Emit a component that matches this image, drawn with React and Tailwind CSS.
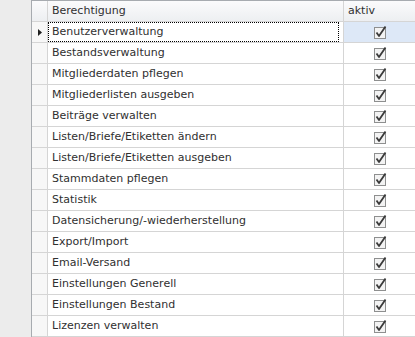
import React from 'react';

const rows = [
  'Benutzerverwaltung',
  'Bestandsverwaltung',
  'Mitgliederdaten pflegen',
  'Mitgliederlisten ausgeben',
  'Beiträge verwalten',
  'Listen/Briefe/Etiketten ändern',
  'Listen/Briefe/Etiketten ausgeben',
  'Stammdaten pflegen',
  'Statistik',
  'Datensicherung/-wiederherstellung',
  'Export/Import',
  'Email-Versand',
  'Einstellungen Generell',
  'Einstellungen Bestand',
  'Lizenzen verwalten',
];

function CheckBox() {
  return (
    <svg width="14" height="14" viewBox="0 0 14 14" className="block">
      <rect x="1.5" y="2.5" width="11" height="11" fill="#f3f3f3" stroke="#8e8f8f" />
      <path d="M3.5 7.5 L6 11 L12.5 1.5" fill="none" stroke="#3a3a3a" strokeWidth="1.8" strokeLinejoin="round" />
    </svg>
  );
}

export default function App() {
  return (
    <div
      className="flex h-[337px] w-[415px] overflow-hidden bg-white text-[11px] text-[#303030]"
      style={{ fontFamily: 'Tahoma, "DejaVu Sans", sans-serif' }}
    >
      <div className="w-[32px] shrink-0 border-r border-[#a7abb0] bg-[#ececec]" />
      <div className="flex-1">
        {/* header */}
        <div className="grid h-[22px] grid-cols-[16px_296px_1fr] border-t border-[#a7abb0] bg-gradient-to-b from-[#fbfbfc] to-[#eceef1]">
          <div className="border-r border-b border-[#d5d5d5]" />
          <div className="flex items-center border-r border-b border-[#d5d5d5] pl-[4px]">Berechtigung</div>
          <div className="flex items-center border-b border-[#d5d5d5] pl-[4px]">aktiv</div>
        </div>
        {rows.map((r, i) => (
          <div key={r} className="grid h-[21px] grid-cols-[16px_296px_1fr]">
            <div className="flex items-center justify-center border-r border-b border-[#d5d5d5] bg-[#f7f7f7]">
              {i === 0 && (
                <svg width="4" height="7" viewBox="0 0 4 7">
                  <path d="M0 0 L4 3.5 L0 7 Z" fill="#202020" />
                </svg>
              )}
            </div>
            <div className="flex items-center border-r border-b border-[#d5d5d5] pl-[4px]">
              {i === 0 ? (
                <div className="flex h-full w-full items-center border border-dotted border-black pl-[3px] -ml-[4px]">
                  {r}
                </div>
              ) : (
                r
              )}
            </div>
            <div className={`flex items-center justify-center border-b border-[#d5d5d5] ${i === 0 ? 'bg-[#dde8f7]' : ''}`}>
              <CheckBox />
            </div>
          </div>
        ))}
      </div>
    </div>
  );
}
